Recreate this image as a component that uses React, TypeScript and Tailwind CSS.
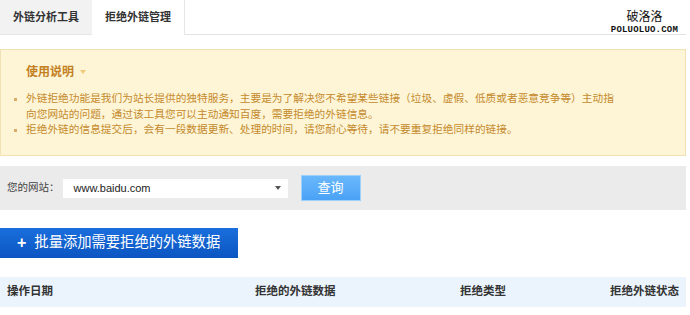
import React from "react";

const font = { fontFamily: '"Liberation Sans", "Noto Sans CJK SC", sans-serif' };

export default function App() {
  return (
    <div className="w-[690px] h-[315px] bg-white overflow-hidden" style={font}>
      <div className="w-[686px]">
        {/* Tabs */}
        <div className="flex h-[35px]">
          <div className="w-[92px] bg-[#f2f2f2] border-b border-[#e6e6e6] flex items-center justify-center text-[11px] font-bold text-[#333]">
            外链分析工具
          </div>
          <div className="w-[93px] bg-white border-r border-[#e6e6e6] flex items-center justify-center text-[11px] font-bold text-[#333]">
            拒绝外链管理
          </div>
          <div className="flex-1 border-b border-[#e3e3e3] flex justify-end pr-[8px]">
            <div className="flex flex-col items-center pt-[8px]">
              <div className="text-[12px] leading-[15px] text-[#111]" style={{ fontFamily: '"Noto Sans CJK SC", sans-serif' }}>破洛洛</div>
              <div className="text-[9px] leading-[10px] font-bold text-[#111] tracking-[0.2px] mt-[2px]" style={{ fontFamily: '"Liberation Mono", monospace' }}>POLUOLUO.COM</div>
            </div>
          </div>
        </div>

        {/* Notice */}
        <div className="mt-[14px] h-[107px] bg-[#fef5d7] border border-[#f1e2b6] pt-[14px]">
          <div className="flex items-center pl-[25px] h-[16px]">
            <span className="text-[12px] font-bold text-[#c3801f]">使用说明</span>
            <span className="ml-[6px] w-0 h-0 border-l-[3.5px] border-r-[3.5px] border-t-[4px] border-l-transparent border-r-transparent border-t-[#f0c978]" />
          </div>
          <div className="mt-[11px] text-[10.7px] leading-[15.5px] text-[#c48a2c]">
            <div className="flex">
              <span className="w-[25px] flex justify-center pt-[7px] pl-[4px]"><span className="block w-[3px] h-[3px] bg-[#d9ad66]" /></span>
              <div>
                <div>外链拒绝功能是我们为站长提供的独特服务，主要是为了解决您不希望某些链接（垃圾、虚假、低质或者恶意竞争等）主动指</div>
                <div>向您网站的问题，通过该工具您可以主动通知百度，需要拒绝的外链信息。</div>
              </div>
            </div>
            <div className="flex">
              <span className="w-[25px] flex justify-center pt-[7px] pl-[4px]"><span className="block w-[3px] h-[3px] bg-[#d9ad66]" /></span>
              <div>拒绝外链的信息提交后，会有一段数据更新、处理的时间，请您耐心等待，请不要重复拒绝同样的链接。</div>
            </div>
          </div>
        </div>

        {/* Search bar */}
        <div className="mt-[10px] h-[44px] bg-[#ebebeb] flex items-center">
          <span className="ml-[7px] text-[10.5px] text-[#444]">您的网站：</span>
          <div className="ml-[3px] w-[225px] h-[19px] bg-white flex items-center justify-between pl-[11px] pr-[7px]">
            <span className="text-[11px] text-[#222]">www.baidu.com</span>
            <span className="w-0 h-0 border-l-[3px] border-r-[3px] border-t-[4px] border-l-transparent border-r-transparent border-t-[#555]" />
          </div>
          <div className="ml-[13px] w-[60px] h-[26px] bg-gradient-to-b from-[#6ab8fc] to-[#4aa2f6] border border-[#9dd0fb] flex items-center justify-center text-[13px] text-white">
            查询
          </div>
        </div>

        {/* Add button */}
        <div className="mt-[18px] w-[238px] h-[30px] bg-gradient-to-b from-[#1a6fdc] to-[#0b55c2] flex items-center pl-[17px] text-white">
          <span className="text-[16px] font-bold leading-none mr-[8px]">+</span>
          <span className="text-[14.3px]">批量添加需要拒绝的外链数据</span>
        </div>

        {/* Table header */}
        <div className="mt-[19px] h-[30px] bg-[#ebf4fc] flex items-center text-[11.5px] font-bold text-[#333]">
          <div className="w-[255px] pl-[7px]">操作日期</div>
          <div className="w-[205px]">拒绝的外链数据</div>
          <div className="w-[150px]">拒绝类型</div>
          <div className="flex-1">拒绝外链状态</div>
        </div>
      </div>
    </div>
  );
}
